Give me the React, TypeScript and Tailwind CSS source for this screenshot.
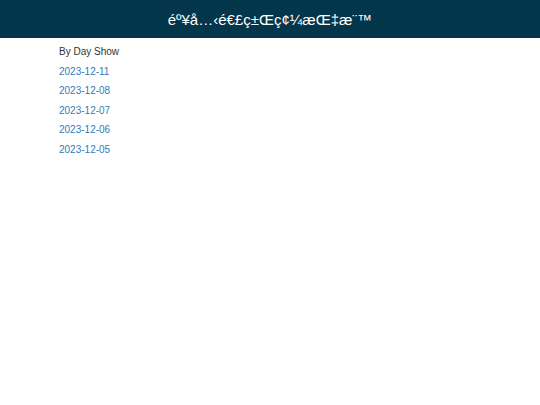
export default function App() {
  const dates = ["2023-12-11", "2023-12-08", "2023-12-07", "2023-12-06", "2023-12-05"];
  return (
    <div className="min-h-screen bg-white" style={{ fontFamily: '"Liberation Sans", Arial, sans-serif' }}>
      <header className="h-[38px] bg-[#03364a] flex items-center justify-center">
        <h1 className="text-white text-[15px] leading-none font-normal">éº¥å…‹é€£ç±Œç¢¼æŒ‡æ¨™</h1>
      </header>
      <div className="pl-[59px] pt-[4px] text-[10px] leading-[19.6px]">
        <div className="text-[#333333]">By Day Show</div>
        <ul>
          {dates.map((d) => (
            <li key={d}>
              <a href="#" className="text-[#337ab7]">{d}</a>
            </li>
          ))}
        </ul>
      </div>
    </div>
  );
}
